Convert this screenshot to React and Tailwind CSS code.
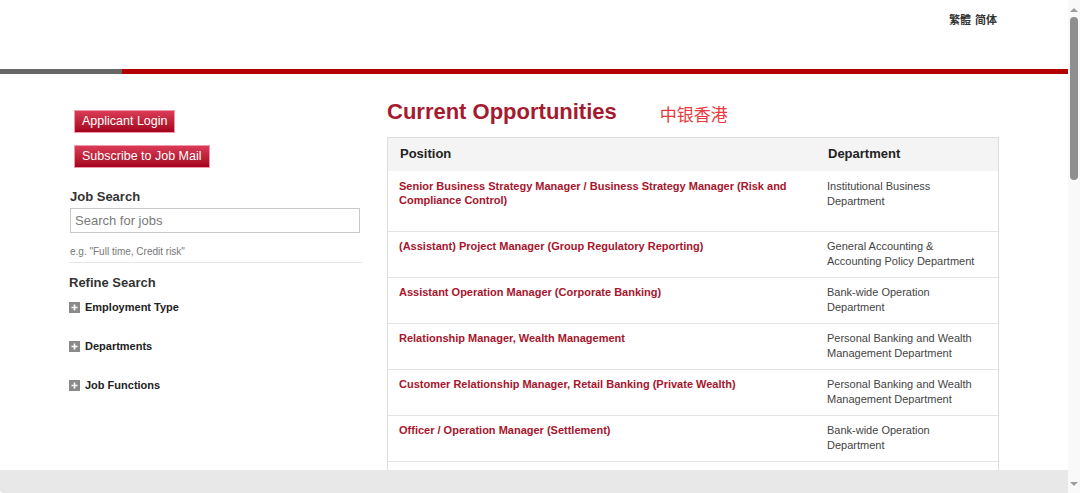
import React from 'react'

const jobs = [
  {
    title: 'Senior Business Strategy Manager / Business Strategy Manager (Risk and Compliance Control)',
    dept: 'Institutional Business Department',
    h: 'h-[61px] pt-[8px]',
  },
  {
    title: '(Assistant) Project Manager (Group Regulatory Reporting)',
    dept: 'General Accounting & Accounting Policy Department',
    h: 'h-[46px] pt-[7px]',
  },
  {
    title: 'Assistant Operation Manager (Corporate Banking)',
    dept: 'Bank-wide Operation Department',
    h: 'h-[46px] pt-[7px]',
  },
  {
    title: 'Relationship Manager, Wealth Management',
    dept: 'Personal Banking and Wealth Management Department',
    h: 'h-[46px] pt-[7px]',
  },
  {
    title: 'Customer Relationship Manager, Retail Banking (Private Wealth)',
    dept: 'Personal Banking and Wealth Management Department',
    h: 'h-[46px] pt-[7px]',
  },
  {
    title: 'Officer / Operation Manager (Settlement)',
    dept: 'Bank-wide Operation Department',
    h: 'h-[46px] pt-[7px]',
  },
]

const filters = ['Employment Type', 'Departments', 'Job Functions']

function RedButton({ children }) {
  return (
    <button className="h-[23px] px-[7px] text-[12.5px] leading-none text-white border border-[#ee9aab] bg-gradient-to-b from-[#db3a56] to-[#a3001d] self-start">
      {children}
    </button>
  )
}

function PlusBox() {
  return (
    <span className="w-[11px] h-[11px] bg-[#8a8a8a] flex items-center justify-center">
      <svg width="7" height="7" viewBox="0 0 7 7">
        <path d="M3.5 0.5v6M0.5 3.5h6" stroke="#fff" strokeWidth="1.6" />
      </svg>
    </span>
  )
}

function Sidebar() {
  return (
    <div className="w-[293px] flex flex-col pt-[36px]">
      <div className="flex flex-col gap-[12px] pl-[5px]">
        <RedButton>Applicant Login</RedButton>
        <RedButton>Subscribe to Job Mail</RedButton>
      </div>
      <h3 className="mt-[21px] pl-[1px] text-[13px] leading-[16px] font-bold text-[#333]">Job Search</h3>
      <input
        className="mt-[3px] ml-[1px] w-[290px] h-[25px] border border-[#c8c8c8] px-[4px] text-[13px] text-[#333] placeholder:text-[#7a7a7a] outline-none"
        placeholder="Search for jobs"
      />
      <p className="mt-[13px] pl-[1px] text-[10px] leading-[12px] text-[#777]">e.g. "Full time, Credit risk"</p>
      <div className="mt-[4px] h-px bg-[#e6e6e6]" />
      <h3 className="mt-[12px] text-[13px] leading-[16px] font-bold text-[#333]">Refine Search</h3>
      <ul className="mt-[9px] flex flex-col gap-[25px]">
        {filters.map((f) => (
          <li key={f} className="flex items-center gap-[5px] h-[14px] text-[11px] font-bold text-[#222]">
            <PlusBox />
            {f}
          </li>
        ))}
      </ul>
    </div>
  )
}

function JobTable() {
  return (
    <div className="mt-[12px] border border-[#dedede]">
      <div className="flex h-[33px] items-center pb-[2px] bg-[#f4f4f4] text-[13px] font-bold text-[#222]">
        <div className="w-[428px] pl-[12px]">Position</div>
        <div className="flex-1 pl-[12px]">Department</div>
      </div>
      {jobs.map((j) => (
        <div key={j.title} className={`flex ${j.h} border-b border-[#e4e4e4]`}>
          <div className="w-[428px] pl-[11px] pr-[20px] text-[11px] leading-[14px] font-bold text-[#a8142c]">
            {j.title}
          </div>
          <div className="flex-1 pl-[11px] pr-[14px] text-[11px] leading-[14.5px] text-[#444]">{j.dept}</div>
        </div>
      ))}
      <div className="h-[46px]" />
    </div>
  )
}

function Scrollbar() {
  return (
    <div className="w-[12px] h-full bg-[#f9f9f9] flex flex-col items-center">
      <svg width="8" height="6" viewBox="0 0 8 6" className="mt-[7px]">
        <path d="M0 5L4 1L8 5Z" fill="#9e9e9e" />
      </svg>
      <div className="mt-[4px] w-[8px] h-[163px] rounded-full bg-[#8f8f8f]" />
      <div className="flex-1" />
      <svg width="8" height="6" viewBox="0 0 8 6" className="mb-[6px]">
        <path d="M0 1L4 5L8 1Z" fill="#9e9e9e" />
      </svg>
    </div>
  )
}

export default function App() {
  return (
    <div
      className="w-[1080px] h-[493px] flex bg-white overflow-hidden"
      style={{ fontFamily: '"Liberation Sans", Arial, "Noto Sans CJK SC", sans-serif' }}
    >
      <div className="w-[1068px] flex flex-col">
        <header className="h-[69px] w-[930px] mx-auto flex justify-end pt-[13px] pr-[2px]">
          <div className="flex gap-[4px] text-[11px] leading-[14px] font-bold text-[#333] h-[14px]">
            <span>繁體</span>
            <span>简体</span>
          </div>
        </header>
        <div className="flex h-[5px]">
          <div className="w-[122px] bg-[#666]" />
          <div className="flex-1 bg-[#b20000]" />
        </div>
        <main className="flex-1 overflow-hidden">
          <div className="w-[930px] mx-auto flex justify-between">
            <Sidebar />
            <section className="w-[612px] pt-[25px]">
              <div className="flex items-start h-[26px]">
                <h1 className="text-[22px] leading-[26px] font-bold text-[#a51a2f]">Current Opportunities</h1>
                <span className="ml-[43px] mt-[6px] text-[17px] leading-[22px] text-[#e8393d]">中银香港</span>
              </div>
              <JobTable />
            </section>
          </div>
        </main>
        <div className="h-[23px] bg-[#e8e8e8] rounded-bl-[4px]" />
      </div>
      <Scrollbar />
    </div>
  )
}
